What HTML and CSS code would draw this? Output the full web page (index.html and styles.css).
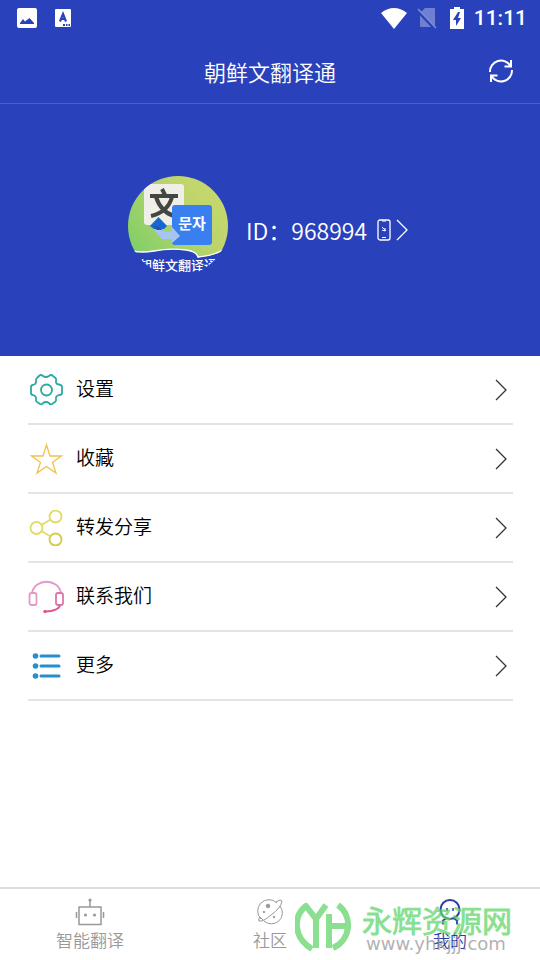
FILE: index.html
```html
<!DOCTYPE html>
<html lang="zh-CN">
<head>
<meta charset="utf-8">
<meta name="viewport" content="width=device-width, initial-scale=1">
<title>朝鲜文翻译通</title>
<link rel="stylesheet" href="styles.css">
</head>
<body>
<div class="status">
  <div class="status-group notices">
    <svg width="20" height="20" viewBox="0 0 20 20" aria-hidden="true"><rect width="20" height="20" rx="2" fill="#fff"/><path d="M3 16v-1l3-4 2 2.500L12.500 10l4.500 5v1z" fill="#2942bb"/></svg>
    <svg width="16" height="18" viewBox="0 0 16 18" aria-hidden="true"><rect width="16" height="18" rx="1" fill="#fff"/><path d="M5 12.500L8 5l3 7.500M6 10h4" fill="none" stroke="#2942bb" stroke-width="2.200"/><path d="M8 15h2v2H8zM11 15h1.500v2H11zM13.500 15H15v2h-1.500z" fill="#2942bb"/></svg>
  </div>
  <div class="status-group">
    <svg width="26" height="21" viewBox="0 0 26 21" aria-hidden="true"><path d="M0 5Q13-5 26 5L13 21z" fill="#fff"/></svg>
    <svg class="sim" width="20" height="22" viewBox="0 0 20 22" aria-hidden="true"><path d="M8 1h9q1 0 1 1v17q0 1-1 1H4q-1 0-1-1V6z" fill="#6f7fd2"/><path d="M0 3l18 19" stroke="#2942bb" stroke-width="3"/><path d="M1 2l18 19" stroke="#7f8dd6" stroke-width="1.500"/></svg>
    <svg class="battery" width="14" height="22" viewBox="0 0 14 22" aria-hidden="true"><path d="M4 0h6v2h4v20H0V2h4z" fill="#fff"/><path d="M8 5L3 13h3v6l5-8H8l2-6z" fill="#2942bb"/></svg>
    <span class="clock">11:11</span>
  </div>
</div>
<header class="header">
  <h1>朝鲜文翻译通</h1>
  <button class="refresh" aria-label="刷新">
    <svg width="26" height="26" viewBox="0 0 26 26" fill="none" stroke="#fff" stroke-width="2" aria-hidden="true"><path d="M2 14A11 11 0 0 1 22.500 8M23 2v6.500h-6.500M24 12A11 11 0 0 1 3.500 18M3 24v-6.500h6.500"/></svg>
  </button>
</header>
<section class="profile">
  <svg class="avatar" width="100" height="100" viewBox="0 0 100 100" role="img" aria-label="朝鲜文翻译通">
    <defs>
      <clipPath id="round"><circle cx="50" cy="50" r="50"/></clipPath>
      <linearGradient id="lime" x1="0" y1=".8" x2="1" y2=".2"><stop offset="0" stop-color="#82cf68"/><stop offset=".6" stop-color="#bcd46c"/><stop offset="1" stop-color="#c8d96c"/></linearGradient>
    </defs>
    <g clip-path="url(#round)">
      <path d="M0 0h100v72Q88 80 72 81L70 82Q68 75 58 74Q42 72 26 75Q14 77 4 75L0 68z" fill="url(#lime)"/>
      <path d="M4 75Q14 77 26 75Q42 72 58 74Q68 75 70 81Q86 80 98 72" fill="none" stroke="#fff" stroke-width="1.300"/>
      <rect x="16" y="8" width="40" height="41" rx="3" fill="#efeee9"/>
      <path d="M34 13l3 6M22 20h28M28 21q5 15 18 19M44 21q-4 15-21 19" fill="none" stroke="#45463f" stroke-width="4"/>
      <path d="M22 50L30.500 41l8.500 9-3 3H26z" fill="#1767d2"/>
      <path d="M26 50h4l6 6h-6z" fill="#2455ad"/>
      <rect x="44" y="29" width="40" height="40" rx="3" fill="#397fef"/>
      <path d="M26 54h8l4 2h6v-5l8 9-8 7v-4H34z" fill="#a7c5f3"/>
      <text class="badge-text" x="64" y="53" text-anchor="middle">문자</text>
      <text class="avatar-text" x="50" y="94" text-anchor="middle">朝鲜文翻译通</text>
    </g>
  </svg>
  <a class="account" href="#account">
    <span>ID：968994</span>
    <svg class="phone" width="14" height="22" viewBox="0 0 14 22" fill="none" stroke="#fff" aria-hidden="true"><rect x="1" y="1" width="12" height="20" rx="2" stroke-width="1.300"/><path d="M5 2h4M5 18.500h4M5 8l4 4M5 11l3 1V9"/></svg>
    <svg width="12" height="22" viewBox="0 0 12 22" fill="none" stroke="#fff" stroke-width="1.300" aria-hidden="true"><path d="M1 1l10 10L1 21"/></svg>
  </a>
</section>
<main>
  <ul class="menu">
    <li><a href="#settings">
      <svg class="icon" viewBox="0 0 36 36" fill="none" stroke="#2aa9a3" stroke-width="1.800" stroke-linejoin="round" aria-hidden="true"><path d="M11 4Q13 2 15 4Q18 6 21 4Q23 2 25 4L27.500 6Q28.500 7 28 9Q27.500 12 31 12.500Q34 13 34 15V21Q34 23 31 23Q27.500 24 28 27Q28.500 29 27 30L24 32Q22 33 21 31Q18 29 15 31Q14 33 12 32L9 30Q7.500 29 8 27Q8.500 24 5 23Q3 23 3 21V15Q3 13 5 13Q8.500 12 8 9Q7.500 7 9 6z"/><circle cx="18.500" cy="18" r="5.500"/></svg>
      <span class="label">设置</span>
      <svg class="arrow" viewBox="0 0 12 22" aria-hidden="true"><path d="M1 1l10 10L1 21"/></svg></a></li>
    <li><a href="#favorites">
      <svg class="icon" viewBox="0 0 36 36" fill="none" stroke="#f1c246" stroke-width="1.300" aria-hidden="true"><path d="M18.500 4L22 15H33.500L24.500 21.500L28 32L18.500 25.500L9 32L12.500 21.500L3.500 15H15z"/></svg>
      <span class="label">收藏</span>
      <svg class="arrow" viewBox="0 0 12 22" aria-hidden="true"><path d="M1 1l10 10L1 21"/></svg></a></li>
    <li><a href="#share">
      <svg class="icon" viewBox="0 0 36 36" fill="none" stroke="#e0dc69" stroke-width="1.800" aria-hidden="true"><circle cx="8.500" cy="18" r="6"/><circle cx="27.500" cy="6.500" r="6"/><circle cx="27.500" cy="29.500" r="6" stroke="#d5cc45"/><path d="M13.500 15l9-5.500M13.500 21l9 5.500"/></svg>
      <span class="label">转发分享</span>
      <svg class="arrow" viewBox="0 0 12 22" aria-hidden="true"><path d="M1 1l10 10L1 21"/></svg></a></li>
    <li><a href="#contact">
      <svg class="icon" viewBox="0 0 36 36" fill="none" stroke="#e597c6" stroke-width="1.800" aria-hidden="true"><path d="M4 14C7-1 30-1 33 14"/><rect x="1.500" y="14" width="7" height="12" rx="2"/><rect x="28" y="14" width="7" height="12" rx="2" stroke="#dc76ac"/><path d="M32 27Q29 32 18 32.500" stroke="#d85b91" stroke-width="2"/><circle cx="17" cy="32.500" r="1.700" fill="#d85b91" stroke="none"/></svg>
      <span class="label">联系我们</span>
      <svg class="arrow" viewBox="0 0 12 22" aria-hidden="true"><path d="M1 1l10 10L1 21"/></svg></a></li>
    <li><a href="#more">
      <svg class="icon" viewBox="0 0 36 36" fill="#238fcd" aria-hidden="true"><circle cx="7.500" cy="8" r="2.800"/><circle cx="7.500" cy="18" r="2.800"/><circle cx="7.500" cy="28" r="2.800"/><path d="M13 8h18M13 18h18M13 28h18" stroke="#238fcd" stroke-width="3" stroke-linecap="round"/></svg>
      <span class="label">更多</span>
      <svg class="arrow" viewBox="0 0 12 22" aria-hidden="true"><path d="M1 1l10 10L1 21"/></svg></a></li>
  </ul>
</main>
<footer class="footer">
  <nav class="tabs">
    <a href="#translate">
      <svg width="30" height="30" viewBox="0 0 30 30" fill="none" stroke="#999" stroke-width="1.500" aria-hidden="true"><rect x="4" y="10" width="22" height="17.500"/><path d="M15 10V4M1.500 15v6M28.500 15v6"/><circle cx="15" cy="3" r="1.600" fill="#999" stroke="none"/><circle cx="10.500" cy="18" r="1.600" fill="#999" stroke="none"/><circle cx="19.500" cy="18" r="1.600" fill="#999" stroke="none"/></svg>
      <span>智能翻译</span></a>
    <a href="#community">
      <svg width="30" height="30" viewBox="0 0 30 30" fill="none" stroke="#999" aria-hidden="true"><path d="M22 6A11 11 0 1 0 6 22M9 24A11 11 0 0 0 25 9M21 5Q26 2 27 4Q26 11 16 18Q8 25 4 24Q3 22 5 20L8 23"/><circle cx="13" cy="9" r="1.800" fill="#999"/><circle cx="9" cy="15" r=".8" fill="#999"/><circle cx="19" cy="20" r=".8" fill="#999"/></svg>
      <span>社区</span></a>
    <a class="active" href="#mine" aria-current="page">
      <svg width="30" height="30" viewBox="0 0 30 30" fill="none" stroke="#283daa" stroke-width="2" aria-hidden="true"><circle cx="15" cy="12.500" r="9.500"/><path d="M12 11v3M18 11v3" stroke-width="1.500"/><path d="M11 21.500l-3 2v4M19 21.500l3 2v4" stroke-width="1.800"/></svg>
      <span>我的</span></a>
  </nav>
  <div class="watermark">
    <svg width="56" height="50" viewBox="0 0 56 50" fill="none" stroke="#63d56b" stroke-width="6" stroke-linejoin="round" aria-hidden="true"><path d="M17 47C-2 36-2 14 11 4L21 17L31 3M21 16v30M34 12v34M34 24h18M43 3C58 14 56 38 38 46"/></svg>
    <div class="wm-copy"><span class="wm-name">永辉资源网</span><span class="wm-url">www.yhkjjj.com</span></div>
  </div>
</footer>
</body>
</html>
```
FILE: styles.css
```css
* { box-sizing: border-box; }
body {
  margin: 0;
  min-height: 100vh;
  display: flex;
  flex-direction: column;
  background: #fff;
  color: #000;
  font-family: "Noto Sans CJK SC DemiLight", "Noto Sans CJK SC", sans-serif;
  font-weight: 350;
}
svg { display: block; flex-shrink: 0; }
a { color: inherit; text-decoration: none; }
.status {
  display: flex;
  justify-content: space-between;
  align-items: center;
  height: 36px;
  padding: 0 13px 0 17px;
  background: #2942bb;
  color: #fff;
}
.status-group { display: flex; align-items: center; gap: 10px; }
.notices { gap: 18px; }
.battery { margin-left: 3px; }
.clock { font: 500 21px/36px Roboto, sans-serif; }
.header {
  display: grid;
  grid-template-columns: 1fr auto 1fr;
  align-items: center;
  height: 68px;
  padding: 2px 26px 0;
  background: #2942bb;
  border-bottom: 1px solid #4a5fc8;
  color: #fff;
}
.header h1 { grid-column: 2; margin: 0; font-size: 22px; line-height: 32px; font-weight: inherit; }
.refresh { justify-self: end; padding: 0; border: 0; background: none; cursor: pointer; }
.profile {
  display: flex;
  justify-content: center;
  align-items: center;
  gap: 18px;
  padding: 72px 24px 72px 20px;
  background: #2942bb;
  color: #fff;
}
.avatar { margin-bottom: 8px; }
.badge-text { font: 600 15px "Noto Sans CJK KR", sans-serif; fill: #fff; }
.avatar-text { font: 500 13px "Noto Sans CJK SC", sans-serif; fill: #fff; }
.account { display: flex; align-items: center; font-size: 23px; line-height: 34px; }
.phone { margin: 0 5px 0 10px; }
main { flex: 1; padding: 0 27px 0 28px; }
.menu { list-style: none; margin: 0; padding: 0; }
.menu li { border-bottom: 2px solid #e4e4e4; }
.menu a { display: flex; align-items: center; gap: 12px; height: 67px; }
.icon { width: 36px; height: 36px; }
.label { flex: 1; padding-bottom: 3px; font-size: 19px; line-height: 28px; }
.arrow { width: 12px; height: 22px; margin-right: 6px; fill: none; stroke: #333; stroke-width: 1.3px; }
.footer { position: relative; border-top: 2px solid #dedede; }
.tabs { display: grid; grid-template-columns: repeat(3, 1fr); }
.tabs a {
  display: flex;
  flex-direction: column;
  align-items: center;
  padding: 8px 0 7px;
  color: #999;
  font-size: 17px;
  line-height: 26px;
}
.tabs .active { color: #283daa; }
.watermark {
  position: absolute;
  right: 28px;
  bottom: 8px;
  display: flex;
  align-items: center;
  gap: 11px;
  opacity: .75;
  pointer-events: none;
}
.wm-copy { display: flex; flex-direction: column; }
.wm-name { font-size: 30px; line-height: 34px; font-weight: 900; color: #63d56b; }
.wm-url { font: 18px/16px "DejaVu Sans", sans-serif; color: #999; padding-left: 4px; }
```
